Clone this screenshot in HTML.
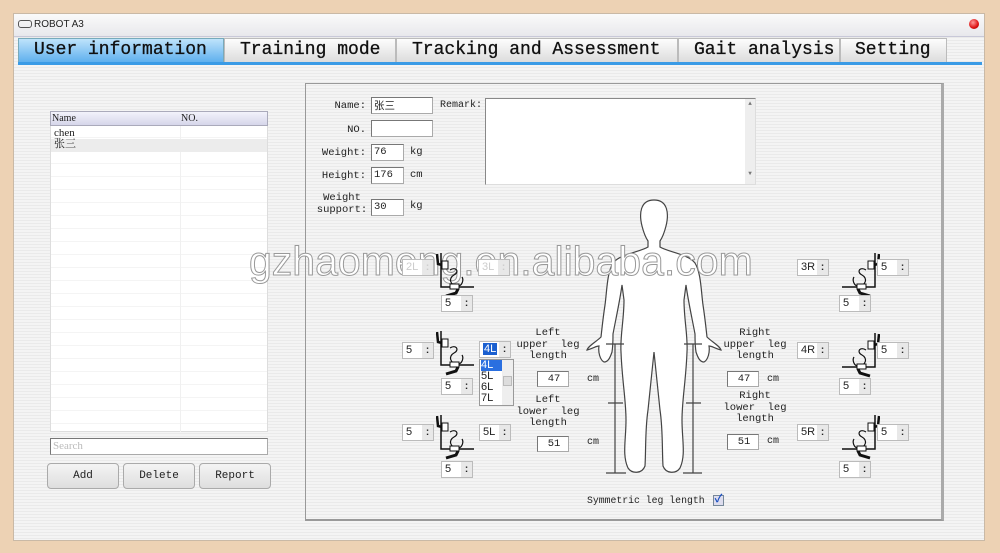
<!DOCTYPE html>
<html><head><meta charset="utf-8"><style>
*{margin:0;padding:0;box-sizing:border-box}
body{width:1000px;height:553px;overflow:hidden;background:#edd2b4;position:relative;font-family:"Liberation Mono","Noto Sans CJK SC",monospace;font-size:10.5px;color:#222}
.a{position:absolute}
#win{left:13px;top:13px;width:972px;height:528px;background:repeating-linear-gradient(#f4f4f4 0 2px,#eaeaea 2px 3px);border:1px solid #c9b9a6}
.title{left:14px;top:14px;width:970px;height:22px;background:linear-gradient(#fafafa,#e8e8ec);font-family:"Liberation Sans",sans-serif;font-size:10px}
.tab{top:38px;height:24px;background:linear-gradient(#fdfdfd,#dcdcdc);border:1px solid #bbb;border-bottom:none;font-size:18px;padding-left:12px;line-height:22px;color:#111;-webkit-text-stroke:0.3px #111}
.inp{background:#fff;border:1px solid #aaa;border-top-color:#777;border-left-color:#777;font-size:10.5px;padding-left:2px;line-height:15px}
.sp{background:#fff;border:1px solid #bbb;width:32px;height:17px;font-family:"Liberation Sans",sans-serif;font-size:11px;line-height:15px;padding-left:3px}
.sp::after{content:":";position:absolute;right:0;top:0;width:11px;height:15px;background:#e8e8e8;font-size:10px;text-align:center;font-weight:bold}
.btn{top:463px;height:26px;border:1px solid #aaa;border-radius:4px;background:linear-gradient(#f4f4f4,#dedede);text-align:center;line-height:24px;font-size:11px}
.lbl{text-align:right;font-size:10.5px}
.c{text-align:center;font-size:10.5px;line-height:11.5px}
</style></head><body>
<div id="win" class="a"></div>
<div class="a title"><span class="a" style="left:4px;top:6px;width:14px;height:8px;border:1px solid #555;border-radius:3px"></span><span class="a" style="left:20px;top:5px">ROBOT A3</span>
<span class="a" style="left:955px;top:5px;width:10px;height:10px;border-radius:50%;background:radial-gradient(circle at 40% 35%,#f99,#d11 60%,#800)"></span></div>
<div class="a" style="left:14px;top:36px;width:970px;height:1px;background:#c8c8d8"></div>
<div class="a tab" style="left:18px;width:206px;background:linear-gradient(#bfe3fb,#5fb0ee);border-color:#7ab;padding-left:15px">User information</div>
<div class="a tab" style="left:224px;width:172px;padding-left:15px">Training mode</div>
<div class="a tab" style="left:396px;width:282px;padding-left:15px">Tracking and Assessment</div>
<div class="a tab" style="left:678px;width:162px;padding-left:15px">Gait analysis</div>
<div class="a tab" style="left:840px;width:107px;padding-left:14px">Setting</div>
<div class="a" style="left:18px;top:62px;width:964px;height:3px;background:#3a9be6"></div>

<!-- list -->
<div class="a" style="left:50px;top:111px;width:218px;height:321px;background:repeating-linear-gradient(#fff 0 12px,#f4f4f4 12px 13px);border:1px solid #ddd"></div>
<div class="a" style="left:180px;top:111px;width:1px;height:321px;background:#f0f0f0"></div>
<div class="a" style="left:50px;top:111px;width:218px;height:15px;background:linear-gradient(#f2f2fb,#d6d6ea);border:1px solid #aab;font-family:'Liberation Serif',serif;font-size:10px;line-height:13px"><span class="a" style="left:1px">Name</span><span class="a" style="left:130px">NO.</span></div>
<div class="a" style="left:51px;top:139px;width:216px;height:13px;background:#ececec"></div>
<div class="a" style="left:54px;top:128px;font-family:'Liberation Serif','Noto Serif CJK SC',serif;font-size:11px;line-height:11px">chen<br>张三</div>
<div class="a inp" style="left:50px;top:438px;width:218px;height:17px;color:#bbb;font-family:'Liberation Serif',serif;font-size:11px">Search</div>
<div class="a btn" style="left:47px;width:72px">Add</div>
<div class="a btn" style="left:123px;width:72px">Delete</div>
<div class="a btn" style="left:199px;width:72px">Report</div>

<!-- right panel -->
<div class="a" style="left:305px;top:83px;width:639px;height:438px;border:1px solid #999;border-right:3px solid #aaa;border-bottom:2px solid #999"></div>
<div class="a lbl" style="left:310px;top:100px;width:56px">Name:</div>
<div class="a inp" style="left:371px;top:97px;width:62px;height:17px;font-family:'Noto Sans CJK SC',sans-serif">张三</div>
<div class="a lbl" style="left:310px;top:124px;width:56px">NO.</div>
<div class="a inp" style="left:371px;top:120px;width:62px;height:17px"></div>
<div class="a lbl" style="left:310px;top:147px;width:56px">Weight:</div>
<div class="a inp" style="left:371px;top:144px;width:33px;height:17px">76</div><div class="a" style="left:410px;top:146px">kg</div>
<div class="a lbl" style="left:310px;top:170px;width:56px">Height:</div>
<div class="a inp" style="left:371px;top:167px;width:33px;height:17px">176</div><div class="a" style="left:410px;top:169px">cm</div>
<div class="a c" style="left:316px;top:193px;width:52px">Weight<br>support:</div>
<div class="a inp" style="left:371px;top:199px;width:33px;height:17px">30</div><div class="a" style="left:410px;top:200px">kg</div>
<div class="a" style="left:440px;top:100px;font-size:10px">Remark:</div>
<div class="a" style="left:485px;top:98px;width:271px;height:87px;background:#fff;border:1px solid #888;border-right-color:#ddd;border-bottom-color:#ddd"></div>
<div class="a" style="left:745px;top:99px;width:10px;height:85px;background:#eee;font-size:6px;text-align:center;color:#777;line-height:10px">▲<br><br><br><br><br><br><br>▼</div>

<!-- body figure -->
<svg class="a" style="left:580px;top:195px" width="150" height="285" viewBox="580 195 150 285">
<g fill="#fff" stroke="#444" stroke-width="1.2">
<path d="M654 200 C640 200 639 214 642 226 C644 234 646 238 648 241 L648 247 C640 252 620 254 613 263 C607 273 607 290 605 305 C603 318 602 328 601 337 C596 342 588 346 587 350 C594 348 596 346 599 346 C598 352 600 360 604 362 C608 362 610 358 612 352 C613 346 613 340 613 334 C616 318 620 300 622 285 L624 300 C624 320 620 336 621 352 C622 380 626 400 626 420 C626 440 622 455 628 468 C632 474 642 474 645 466 C646 450 645 430 648 410 C650 390 652 370 654 352 C656 370 658 390 660 410 C663 430 662 450 663 466 C666 474 676 474 680 468 C686 455 682 440 682 420 C682 400 686 380 687 352 C688 336 684 320 684 300 L686 285 C688 300 692 318 695 334 C695 340 695 346 696 352 C698 358 700 362 704 362 C708 360 710 352 709 346 C712 346 714 348 721 350 C720 346 712 342 707 337 C706 328 705 318 703 305 C701 290 701 273 695 263 C688 254 668 252 660 247 L660 241 C662 238 664 234 666 226 C669 214 668 200 654 200 Z"/>
</g>
<g stroke="#444" stroke-width="1.2" fill="none">
<path d="M615 344V473M693 344V473M606 344H624M684 344H702M608 403H623M686 403H701M606 473H626M683 473H702"/>
</g>
</svg>

<!-- watermark -->
<div class="a" style="left:249px;top:238px;font-family:'Liberation Sans',sans-serif;font-size:41px;color:#fff;-webkit-text-stroke:1px #999;letter-spacing:0px">gzhaomeng.en.alibaba.com</div>

<svg width="0" height="0" style="position:absolute"><defs><g id="dev" fill="none" stroke="#111" stroke-width="1.5">
<path d="M5 3V37H38"/><rect x="6" y="11" width="6" height="8" fill="#fff" stroke-width="1"/><path d="M1 4L2 14L6 15" stroke-width="2.5"/>
<path d="M14 20C20 16 24 22 18 25C12 28 14 36 22 36C26 36 28 30 26 27" stroke-width="1.2"/><rect x="14" y="34" width="9" height="5" fill="#fff" stroke-width="1"/><path d="M10 46L20 43L22 39" stroke-width="3"/></g></defs></svg>
<svg class="a" style="left:436px;top:250px" width="46" height="50"><use href="#dev"/></svg>
<svg class="a" style="left:436px;top:328px" width="46" height="50"><use href="#dev"/></svg>
<svg class="a" style="left:436px;top:412px" width="46" height="50"><use href="#dev"/></svg>
<svg class="a" style="left:834px;top:250px;transform:scaleX(-1)" width="46" height="50"><use href="#dev"/></svg>
<svg class="a" style="left:834px;top:330px;transform:scaleX(-1)" width="46" height="50"><use href="#dev"/></svg>
<svg class="a" style="left:834px;top:412px;transform:scaleX(-1)" width="46" height="50"><use href="#dev"/></svg>

<div class="a sp" style="left:402px;top:259px;color:#ccc">2L</div>
<div class="a sp" style="left:478px;top:259px;color:#ccc">3L</div>
<div class="a sp" style="left:441px;top:295px">5</div>
<div class="a sp" style="left:402px;top:342px">5</div>
<div class="a sp" style="left:441px;top:378px">5</div>
<div class="a sp" style="left:479px;top:341px"><span style="background:#1a5fd0;color:#fff;padding:0 1px">4L</span></div>
<div class="a" style="left:479px;top:359px;width:35px;height:47px;background:#fff;border:1px solid #999;font-family:'Liberation Sans',sans-serif;font-size:11px;line-height:11px;padding-left:1px"><span style="background:#2a6fe0;color:#fff;display:inline-block;width:22px">4L</span><br>5L<br>6L<br>7L
<span class="a" style="right:0;top:0;width:11px;height:45px;background:#eee"></span><span class="a" style="right:1px;top:16px;width:9px;height:10px;background:#ddd;border:1px solid #bbb"></span></div>
<div class="a sp" style="left:402px;top:424px">5</div>
<div class="a sp" style="left:479px;top:424px">5L</div>
<div class="a sp" style="left:441px;top:461px">5</div>

<div class="a c" style="left:515px;top:328px;width:66px">Left<br>upper&nbsp; leg<br>length</div>
<div class="a inp" style="left:537px;top:371px;width:32px;height:16px;text-align:center">47</div><div class="a" style="left:587px;top:374px;font-size:10px">cm</div>
<div class="a c" style="left:515px;top:395px;width:66px">Left<br>lower&nbsp; leg<br>length</div>
<div class="a inp" style="left:537px;top:436px;width:32px;height:16px;text-align:center">51</div><div class="a" style="left:587px;top:437px;font-size:10px">cm</div>

<div class="a c" style="left:722px;top:328px;width:66px">Right<br>upper&nbsp; leg<br>length</div>
<div class="a inp" style="left:727px;top:371px;width:32px;height:16px;text-align:center">47</div><div class="a" style="left:767px;top:374px;font-size:10px">cm</div>
<div class="a c" style="left:722px;top:391px;width:66px">Right<br>lower&nbsp; leg<br>length</div>
<div class="a inp" style="left:727px;top:434px;width:32px;height:16px;text-align:center">51</div><div class="a" style="left:767px;top:436px;font-size:10px">cm</div>

<div class="a sp" style="left:797px;top:259px">3R</div>
<div class="a sp" style="left:877px;top:259px">5</div>
<div class="a sp" style="left:839px;top:295px">5</div>
<div class="a sp" style="left:797px;top:342px">4R</div>
<div class="a sp" style="left:877px;top:342px">5</div>
<div class="a sp" style="left:839px;top:378px">5</div>
<div class="a sp" style="left:797px;top:424px">5R</div>
<div class="a sp" style="left:877px;top:424px">5</div>
<div class="a sp" style="left:839px;top:461px">5</div>

<div class="a" style="left:587px;top:495px;font-size:9.8px">Symmetric leg length</div>
<div class="a" style="left:713px;top:495px;width:11px;height:11px;background:#dde;border:1px solid #789;color:#1a4fc0;font-size:11px;line-height:9px;text-align:center;font-weight:bold">✓</div>
</body></html>
